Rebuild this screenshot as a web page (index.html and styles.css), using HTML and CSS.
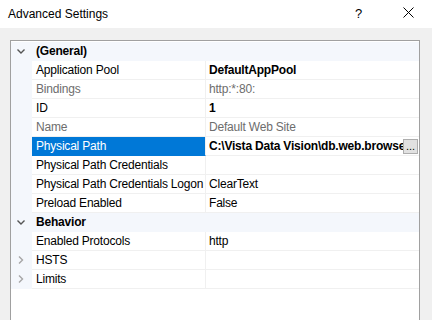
FILE: index.html
```html
<!DOCTYPE html>
<html>
<head>
<meta charset="utf-8">
<link rel="stylesheet" href="styles.css">
</head>
<body>
<div class="dialog">
  <div class="titlebar">
    <span class="title">Advanced Settings</span>
    <span class="help">?</span>
    <span class="close">
      <svg width="11" height="11" viewBox="0 0 11 11"><path d="M0.5 0.5L10.5 10.5M10.5 0.5L0.5 10.5" stroke="#000" stroke-width="1" fill="none"/></svg>
    </span>
  </div>
  <div class="content">
    <div class="grid">
      <div class="row cat">
        <div class="gutter"><svg width="21" height="18" viewBox="0 0 21 18"><path d="M6.5 7.5L10 11L13.5 7.5" stroke="#555" stroke-width="1.4" fill="none"/></svg></div>
        <div class="catname">(General)</div>
      </div>
      <div class="row">
        <div class="gutter"></div>
        <div class="name">Application Pool</div>
        <div class="value bold">DefaultAppPool</div>
      </div>
      <div class="row">
        <div class="gutter"></div>
        <div class="name ro">Bindings</div>
        <div class="value ro">http:*:80:</div>
      </div>
      <div class="row">
        <div class="gutter"></div>
        <div class="name">ID</div>
        <div class="value bold">1</div>
      </div>
      <div class="row">
        <div class="gutter"></div>
        <div class="name ro">Name</div>
        <div class="value ro">Default Web Site</div>
      </div>
      <div class="row">
        <div class="gutter"></div>
        <div class="name selected">Physical Path</div>
        <div class="value bold edit"><span class="clip">C:\Vista Data Vision\db.web.browser</span><span class="dots">...</span></div>
      </div>
      <div class="row">
        <div class="gutter"></div>
        <div class="name">Physical Path Credentials</div>
        <div class="value"></div>
      </div>
      <div class="row">
        <div class="gutter"></div>
        <div class="name">Physical Path Credentials Logon</div>
        <div class="value">ClearText</div>
      </div>
      <div class="row">
        <div class="gutter"></div>
        <div class="name">Preload Enabled</div>
        <div class="value">False</div>
      </div>
      <div class="row cat">
        <div class="gutter"><svg width="21" height="18" viewBox="0 0 21 18"><path d="M6.5 7.5L10 11L13.5 7.5" stroke="#555" stroke-width="1.4" fill="none"/></svg></div>
        <div class="catname">Behavior</div>
      </div>
      <div class="row">
        <div class="gutter"></div>
        <div class="name">Enabled Protocols</div>
        <div class="value">http</div>
      </div>
      <div class="row">
        <div class="gutter"><svg width="21" height="18" viewBox="0 0 21 18"><path d="M8 5.5L11.5 9L8 12.5" stroke="#a6a6a6" stroke-width="1.4" fill="none"/></svg></div>
        <div class="name">HSTS</div>
        <div class="value"></div>
      </div>
      <div class="row">
        <div class="gutter"><svg width="21" height="18" viewBox="0 0 21 18"><path d="M8 5.5L11.5 9L8 12.5" stroke="#a6a6a6" stroke-width="1.4" fill="none"/></svg></div>
        <div class="name">Limits</div>
        <div class="value"></div>
      </div>
    </div>
  </div>
</div>
</body>
</html>
```

FILE: styles.css
```css
html, body {
  margin: 0;
  padding: 0;
}
body {
  width: 432px;
  height: 320px;
  overflow: hidden;
  background: #f0f0f0;
  font-family: "Liberation Sans", Arial, sans-serif;
  font-size: 12px;
  color: #000;
}
.dialog {
  display: flex;
  flex-direction: column;
  height: 320px;
}
.titlebar {
  height: 28px;
  background: #fff;
  display: flex;
  align-items: center;
  flex-shrink: 0;
}
.title {
  padding-left: 8px;
  flex: 1;
  font-size: 12px;
  padding-bottom: 1px;
}
.help {
  font-size: 13px;
  width: 12px;
  margin-right: 36px;
  padding-bottom: 1px;
}
.close {
  display: flex;
  width: 11px;
  margin-right: 18px;
  padding-bottom: 4px;
}
.content {
  flex: 1;
  padding: 12px 0 0 10px;
  overflow: hidden;
}
.grid {
  width: 408px;
  height: 300px;
  border: 1px solid #a0a0a0;
  background: #fff;
  padding-top: 1px;
  letter-spacing: -0.2px;
}
.row {
  display: grid;
  grid-template-columns: 21px 174px 1fr;
  height: 19px;
}
.gutter {
  background: #f4f7fc;
  display: flex;
  align-items: flex-start;
}
.gutter svg {
  display: block;
}
.row.cat {
  background: #f4f7fc;
}
.catname {
  grid-column: 2 / 4;
  font-weight: bold;
  line-height: 18px;
  padding-left: 4px;
  border-bottom: 1px solid #f4f7fc;
}
.name {
  line-height: 18px;
  padding-left: 4px;
  border-bottom: 1px solid #f0f0f0;
  border-right: 1px solid #f0f0f0;
  white-space: nowrap;
  overflow: hidden;
}
.value {
  line-height: 18px;
  padding-left: 3px;
  border-bottom: 1px solid #f0f0f0;
  white-space: nowrap;
  overflow: hidden;
}
.ro {
  color: #6d6d6d;
}
.bold {
  font-weight: bold;
}
.selected {
  background: #0078d7;
  color: #fff;
  border-bottom-color: #0078d7;
}
.edit {
  display: flex;
  align-items: center;
}
.clip {
  flex: 1;
  min-width: 0;
  overflow: hidden;
  white-space: nowrap;
}
.dots {
  width: 13px;
  height: 13px;
  border: 1px solid #adadad;
  background: #e1e1e1;
  margin-right: 1px;
  font-weight: normal;
  font-size: 11px;
  letter-spacing: 0;
  line-height: 12px;
  text-align: center;
  flex-shrink: 0;
}
```
